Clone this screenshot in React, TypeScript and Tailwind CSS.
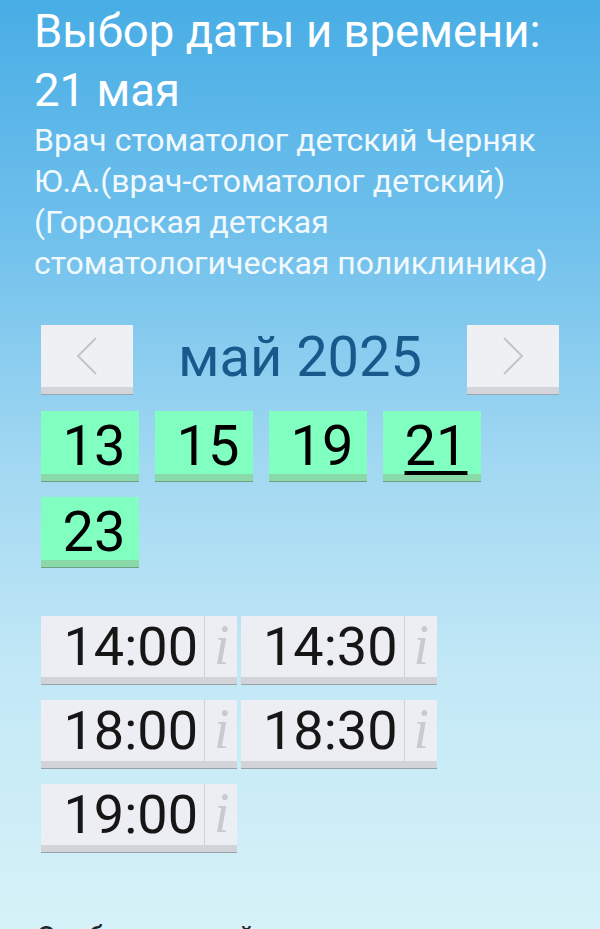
import React from 'react'

const DATES = [
  { day: '13', selected: false },
  { day: '15', selected: false },
  { day: '19', selected: false },
  { day: '21', selected: true },
  { day: '23', selected: false },
]

const TIMES = ['14:00', '14:30', '18:00', '18:30', '19:00']

function Chevron({ dir }: { dir: 'left' | 'right' }) {
  return (
    <svg width="22" height="38" viewBox="0 0 22 38" fill="none">
      <polyline
        points={dir === 'left' ? '20,1 2,19 20,37' : '2,1 20,19 2,37'}
        stroke="#c3c4c8"
        strokeWidth="2"
      />
    </svg>
  )
}

function NavButton({ dir }: { dir: 'left' | 'right' }) {
  return (
    <button className="flex h-[69px] w-[92px] items-center justify-center border-b-[7px] border-[#d3d5da] bg-[#eef0f4] pb-[1px] shadow-[0_1px_0_#9ba3ab]">
      <Chevron dir={dir} />
    </button>
  )
}

function DateButton({ day, selected }: { day: string; selected: boolean }) {
  return (
    <button className="h-[70px] w-[98px] border-b-[7px] border-[#89d9a9] bg-[#80ffc0] pl-[8px] pt-[7px] text-center text-[56px] leading-[56px] text-black shadow-[0_1px_0_#6f9f86]">
      <span className={selected ? 'underline decoration-[4px] underline-offset-[6px]' : ''}>{day}</span>
    </button>
  )
}

function TimeButton({ time }: { time: string }) {
  return (
    <div className="flex h-[68px] w-[196px] border-b-[7px] border-[#d2d4d9] bg-[#eceef3] shadow-[0_1px_0_#98a1aa]">
      <div className="w-[163px] pr-[6px] pt-[1px] text-right text-[54px] leading-[60px] text-[#161616]">
        {time}
      </div>
      <div className="w-[33px] border-l border-[#cfd1d6] pl-[9px] text-[56px] leading-[58px] text-[#c9cacd] italic [font-family:'Liberation_Serif',serif]">
        i
      </div>
    </div>
  )
}

export default function App() {
  return (
    <div className="h-[929px] overflow-hidden bg-[linear-gradient(180deg,#48ade5_0%,#6fc0ec_25%,#a2d8f2_50%,#c2e8f6_72%,#d6f2f8_100%)] [font-family:Roboto,'Noto_Sans',sans-serif]">
      <div className="px-[34px] pt-[2px] text-white">
        <h1 className="text-[45.5px] font-normal leading-[59px]">
          Выбор даты и времени:
          <br />
          21 мая
        </h1>
        <p className="text-[32px] leading-[41px] text-[#f1f9fd]">
          Врач стоматолог детский Черняк Ю.А.(врач-стоматолог детский) (Городская детская стоматологическая поликлиника)
        </p>
      </div>

      <div className="mt-[39px] px-[41px]">
        <div className="flex items-center justify-between">
          <NavButton dir="left" />
          <div className="pb-[4px] text-[56px] leading-[69px] text-[#18598b]">май 2025</div>
          <NavButton dir="right" />
        </div>

        <div className="mt-[15px] flex w-[460px] flex-wrap gap-[16px]">
          {DATES.map((d) => (
            <DateButton key={d.day} day={d.day} selected={d.selected} />
          ))}
        </div>

        <div className="mt-[49px] grid w-[396px] grid-cols-2 gap-x-[3px] gap-y-[16px]">
          {TIMES.map((t) => (
            <TimeButton key={t} time={t} />
          ))}
        </div>
      </div>

      <div className="mt-[64px] px-[36px] text-[30px] leading-[41px] text-[#1d2a33]">
        Отображаемый список времени
      </div>
    </div>
  )
}
